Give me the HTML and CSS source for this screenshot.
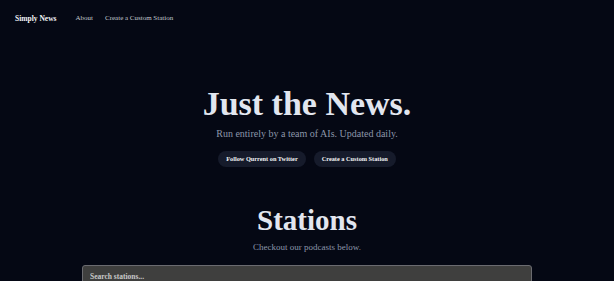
FILE: index.html
```html
<!DOCTYPE html>
<html>
<head>
<meta charset="utf-8">
<link rel="stylesheet" href="styles.css">
</head>
<body>
<nav class="nav">
  <a class="brand" href="#">Simply News</a>
  <div class="links">
    <a class="link" href="#">About</a>
    <a class="link" href="#">Create a Custom Station</a>
  </div>
</nav>
<section class="hero">
  <h1 class="title">Just the News.</h1>
  <p class="sub">Run entirely by a team of AIs. Updated daily.</p>
  <div class="buttons">
    <a class="btn" href="#">Follow Qurrent on Twitter</a>
    <a class="btn" href="#">Create a Custom Station</a>
  </div>
</section>
<section class="stations">
  <h2 class="stations-title">Stations</h2>
  <p class="sub2">Checkout our podcasts below.</p>
  <input class="search" type="text" placeholder="Search stations...">
</section>
</body>
</html>
```
FILE: styles.css
```css
html, body {
  margin: 0;
  padding: 0;
  background: #050814;
  font-family: "Liberation Serif", serif;
  color: #e5e7eb;
  overflow: hidden;
}
a { text-decoration: none; }
.nav {
  display: flex;
  align-items: center;
  height: 36px;
  padding: 0 15px;
}
.brand {
  color: #f3f4f6;
  font-weight: bold;
  font-size: 7.5px;
  margin-right: 19px;
}
.links {
  display: flex;
  gap: 12px;
}
.link {
  color: #c4c8d0;
  font-size: 7px;
}
.hero {
  display: flex;
  flex-direction: column;
  align-items: center;
  padding-top: 48px;
}
.title {
  margin: 0;
  font-family: "Liberation Serif", serif;
  font-weight: bold;
  font-size: 34px;
  line-height: 40px;
  color: #e2e6ef;
}
.sub {
  margin: 4px 0 0;
  font-size: 10px;
  line-height: 12px;
  color: #8c96aa;
}
.buttons {
  display: flex;
  gap: 8px;
  margin-top: 11px;
}
.btn {
  background: #161b2b;
  color: #f3f4f6;
  font-weight: bold;
  font-size: 6.3px;
  padding: 4px 8px;
  border-radius: 999px;
  line-height: 8px;
}
.stations {
  display: flex;
  flex-direction: column;
  align-items: center;
  padding-top: 36px;
}
.stations-title {
  margin: 0;
  font-family: "Liberation Serif", serif;
  font-weight: bold;
  font-size: 29px;
  line-height: 34px;
  color: #e2e6ef;
}
.sub2 {
  margin: 5px 0 0;
  font-size: 9px;
  line-height: 11px;
  color: #8c96aa;
}
.search {
  margin-top: 12px;
  width: 450px;
  box-sizing: border-box;
  height: 22px;
  background: #3f3f3e;
  border: 1px solid #6b6b70;
  border-radius: 3px;
  padding: 0 7px;
  font-family: "Liberation Serif", serif;
  font-weight: bold;
  font-size: 7.5px;
  color: #e5e7eb;
  outline: none;
}
.search::placeholder { color: #c8c8c8; }
```
